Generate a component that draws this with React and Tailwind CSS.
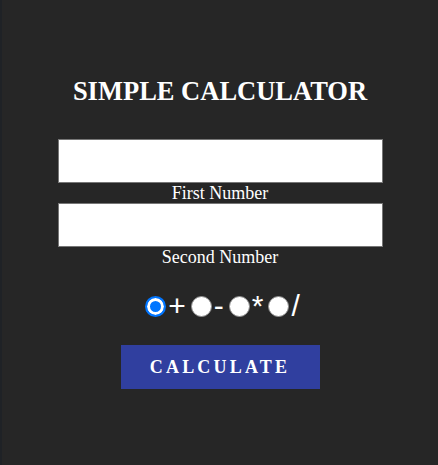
import { useState } from 'react';

const ops = ['+', '-', '*', '/'];

const App = () => {
  const [op, setOp] = useState('+');

  return (
    <div className="min-h-[465px] bg-[#262626] border-l-2 border-[#1f2226] font-['Liberation_Serif',serif] text-white">
      <div className="flex flex-col items-center pt-[76px]">
        <h1 className="text-[26.5px] leading-[30px] font-bold">SIMPLE CALCULATOR</h1>

        <input
          type="text"
          className="mt-[33px] w-[325px] h-[44px] bg-white border border-[#767676] text-black outline-none"
        />
        <label className="text-[18px] leading-[20px]">First Number</label>

        <input
          type="text"
          className="w-[325px] h-[44px] bg-white border border-[#767676] text-black outline-none"
        />
        <label className="text-[18px] leading-[20px]">Second Number</label>

        <div className="mt-[24px] h-[30px] flex items-center font-['Liberation_Sans',sans-serif] text-[30px] leading-none">
          {ops.map((o) => (
            <label key={o} className="flex items-center">
              <input
                type="radio"
                name="op"
                checked={op === o}
                onChange={() => setOp(o)}
                className="appearance-none w-[21px] h-[21px] m-0 ml-[5px] mr-[2px] rounded-full bg-white border border-[#8f8f8f] checked:bg-[#0075ff] checked:border-2 checked:border-[#0075ff] checked:shadow-[inset_0_0_0_3px_#ffffff]"
              />
              <span>{o}</span>
            </label>
          ))}
        </div>

        <button className="mt-[24px] w-[199px] h-[44px] bg-[#303f9f] text-[18px] font-bold tracking-[3.2px] text-white">
          CALCULATE
        </button>
      </div>
    </div>
  );
};

export default App;
